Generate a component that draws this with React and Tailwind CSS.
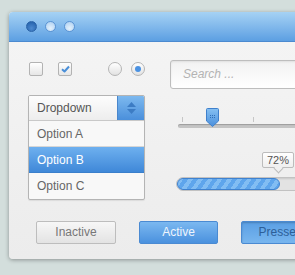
export default function App() {
  return (
    <div className="w-[295px] h-[275px] overflow-hidden bg-[#d3dedc] pl-[9px] pt-[12px] font-['Liberation_Sans',Arial,sans-serif]">
      <div className="w-[300px] h-[247px] rounded-[4px] overflow-hidden bg-gradient-to-b from-[#f5f5f5] to-[#ececec] shadow-[0_1px_4px_rgba(0,0,0,0.35)] flex flex-col">
        {/* title bar */}
        <div className="h-[30px] shrink-0 flex items-center gap-[8px] pl-[17px] bg-gradient-to-b from-[#a6d2f4] to-[#5c9fe2] border-b border-[#4b8ad0]">
          <span className="w-[11px] h-[11px] rounded-full bg-[radial-gradient(circle_at_50%_70%,#4d8ad0,#1f5ca6)] border border-[#2a63a8]" />
          <span className="w-[11px] h-[11px] rounded-full bg-[radial-gradient(circle_at_50%_70%,#e4f1fc,#a9cdf0)] border border-[#5b94d4]" />
          <span className="w-[11px] h-[11px] rounded-full bg-[radial-gradient(circle_at_50%_70%,#e4f1fc,#a9cdf0)] border border-[#5b94d4]" />
        </div>

        {/* body */}
        <div className="flex pl-[19px] pt-[18px] gap-[25px]">
          {/* left column */}
          <div className="w-[117px] flex flex-col">
            <div className="flex items-center h-[14px] mt-[2px] pl-[1px]">
              <span className="w-[14px] h-[14px] rounded-[2px] border border-[#b3b3b3] bg-gradient-to-b from-white to-[#e6e6e6]" />
              <span className="w-[14px] h-[14px] ml-[15px] rounded-[2px] border border-[#b3b3b3] bg-gradient-to-b from-white to-[#e6e6e6] flex items-center justify-center">
                <svg width="9" height="8" viewBox="0 0 9 8">
                  <path d="M1 4.2 L3.5 6.5 L8 1.5" fill="none" stroke="#4a8fd8" strokeWidth="2" strokeLinejoin="round" />
                </svg>
              </span>
              <span className="w-[14px] h-[14px] ml-[36px] rounded-full border border-[#b5b5b5] bg-gradient-to-b from-white to-[#e2e2e2]" />
              <span className="w-[14px] h-[14px] ml-[9px] rounded-full border border-[#b5b5b5] bg-gradient-to-b from-white to-[#e2e2e2] flex items-center justify-center">
                <span className="w-[6px] h-[6px] rounded-full bg-[#4b92e2]" />
              </span>
            </div>

            <div className="mt-[19px] rounded-[2px] border border-[#b4b4b4] overflow-hidden bg-[#f8f8f8] shadow-[0_1px_1px_rgba(0,0,0,0.08)]">
              <div className="h-[25px] flex bg-gradient-to-b from-[#fdfdfd] to-[#ededed] border-b border-[#c9c9c9]">
                <span className="flex-1 pl-[8px] text-[12px] leading-[25px] text-[#555]">Dropdown</span>
                <span className="w-[27px] flex flex-col items-center justify-center gap-[2px] bg-gradient-to-b from-[#7db9ef] to-[#4a8fdb] border-l border-[#4a87cc]">
                  <svg width="9" height="5" viewBox="0 0 9 5"><path d="M0 5 L4.5 0 L9 5 Z" fill="#3c7cc4" /></svg>
                  <svg width="9" height="5" viewBox="0 0 9 5"><path d="M0 0 L4.5 5 L9 0 Z" fill="#3c7cc4" /></svg>
                </span>
              </div>
              <div className="h-[26px] pl-[8px] text-[12px] leading-[26px] text-[#666] border-b border-[#d6d6d6]">Option A</div>
              <div className="h-[26px] pl-[8px] text-[12px] leading-[26px] text-white bg-gradient-to-b from-[#6eb0ef] to-[#3f88d8] border-b border-[#3a7fcb]">Option B</div>
              <div className="h-[26px] pl-[8px] text-[12px] leading-[26px] text-[#666]">Option C</div>
            </div>
          </div>

          {/* right column */}
          <div className="flex-1 flex flex-col">
            <div className="h-[29px] rounded-[3px] border border-[#bdbdbd] bg-gradient-to-b from-[#f2f2f2] to-white shadow-[inset_0_1px_2px_rgba(0,0,0,0.08)] pl-[12px] text-[12px] leading-[27px] italic text-[#b3b3b3]">
              Search ...
            </div>

            {/* slider */}
            <div className="relative mt-[19px] h-[20px] ml-[8px]">
              <span className="absolute left-[4px] top-[9px] w-px h-[5px] bg-[#c6c6c6]" />
              <span className="absolute left-[75px] top-[9px] w-px h-[5px] bg-[#c6c6c6]" />
              <div className="absolute left-0 right-0 top-[16px] h-[4px] rounded-full bg-[#c4c4c4] shadow-[inset_0_1px_1px_rgba(0,0,0,0.2)]" />
              <svg className="absolute left-[28px] top-0" width="13" height="19" viewBox="0 0 13 19">
                <defs>
                  <linearGradient id="th" x1="0" y1="0" x2="0" y2="1">
                    <stop offset="0" stopColor="#86c0f2" />
                    <stop offset="1" stopColor="#4a8fdc" />
                  </linearGradient>
                </defs>
                <path d="M1.5 0.5 H11.5 Q12.5 0.5 12.5 1.5 V13 L6.5 18.5 L0.5 13 V1.5 Q0.5 0.5 1.5 0.5 Z" fill="url(#th)" stroke="#3f80cc" />
                <g fill="#2f6fb8">
                  <rect x="4" y="7" width="1" height="1" />
                  <rect x="6" y="7" width="1" height="1" />
                  <rect x="8" y="7" width="1" height="1" />
                  <rect x="4" y="9" width="1" height="1" />
                  <rect x="6" y="9" width="1" height="1" />
                  <rect x="8" y="9" width="1" height="1" />
                </g>
              </svg>
            </div>

            {/* progress */}
            <div className="relative mt-[49px] ml-[6px] h-[14px] rounded-full border border-[#c2c2c2] bg-[#e3e3e3] shadow-[inset_0_1px_2px_rgba(0,0,0,0.12)]">
              <div className="h-full w-[103px] rounded-full border border-[#3f82cf] bg-[image:repeating-linear-gradient(-55deg,#5ea5ec_0px,#5ea5ec_4px,#82bdf3_4px,#82bdf3_8px)]" />
              <div className="absolute left-[85px] top-[-26px] w-[32px] h-[16px] rounded-[2px] border border-[#bcbcbc] bg-gradient-to-b from-white to-[#efefef] text-[11px] leading-[14px] text-center text-[#555]">
                72%
                <span className="absolute left-[12px] bottom-[-5px] w-[7px] h-[7px] rotate-45 bg-[#f0f0f0] border-r border-b border-[#bcbcbc]" />
              </div>
            </div>
          </div>
        </div>

        {/* buttons */}
        <div className="flex mt-[21px] pl-[27px] gap-[23px]">
          <div className="w-[80px] h-[23px] shrink-0 rounded-[2px] border border-[#bdbdbd] bg-gradient-to-b from-[#f7f7f7] to-[#e3e3e3] text-[12px] leading-[21px] text-center text-[#777]">Inactive</div>
          <div className="w-[79px] h-[23px] shrink-0 rounded-[2px] border border-[#4a8ad2] bg-gradient-to-b from-[#7bb8f0] to-[#4a91de] text-[12px] leading-[21px] text-center text-[#eef5fd]">Active</div>
          <div className="w-[79px] h-[23px] shrink-0 rounded-[2px] border border-[#4a8ad2] bg-gradient-to-b from-[#5a9fe4] to-[#78b6ef] shadow-[inset_0_1px_2px_rgba(0,0,0,0.2)] text-[12px] leading-[21px] text-center text-[#2d5f98]">Pressed</div>
        </div>
      </div>
    </div>
  );
}
